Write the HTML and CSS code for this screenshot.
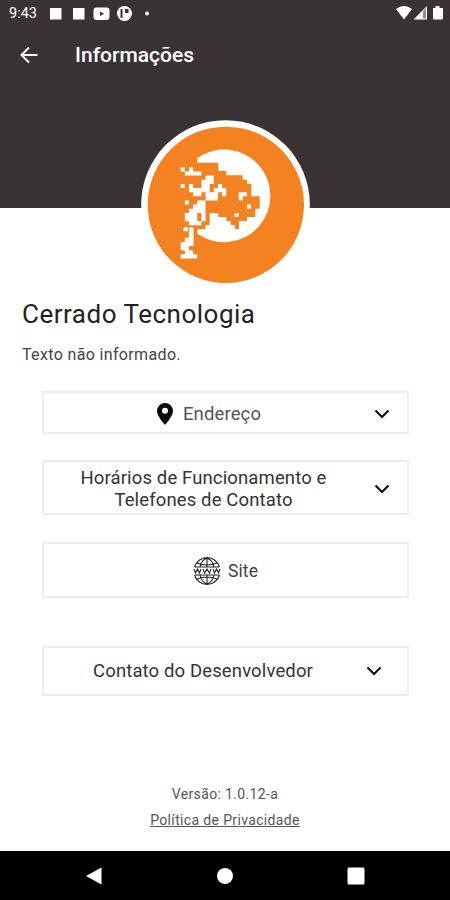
FILE: index.html
```html
<!DOCTYPE html>
<html lang="pt-BR">
<head>
  <meta charset="UTF-8" />
  <meta name="viewport" content="width=device-width, initial-scale=1.0" />
  <title>Informações</title>
  <link rel="stylesheet" href="styles.css">
</head>
<body>

  <header class="topo">
    <div class="status">
      <span class="hora">9:43</span>
      <svg class="notificacoes" width="104" height="18" viewBox="0 0 104 18" fill="#fff">
        <rect x="1" y="4" width="11.500" height="11.500" />
        <rect x="24" y="4" width="11.500" height="11.500" />
        <rect x="44.500" y="3.500" width="16" height="12.500" rx="3" />
        <path d="M51 7.500l4 2.300-4 2.300z" fill="#393433" />
        <circle cx="75.500" cy="9.500" r="7.500" />
        <path d="M71.500 5h2v9h-2zM76 5h3.500v4H76z" fill="#393433" />
        <circle cx="98" cy="9.500" r="2" />
      </svg>
      <svg class="sinais" width="50" height="18" viewBox="0 0 50 18" fill="#fff">
        <path d="M1 5Q9 -1 17 5L9 15.500z" />
        <path d="M32 2V15.500H18.500z" />
        <path d="M28 7l3-3v10.500h-3z" fill="#938f8e" />
        <path d="M38 4h2.500V2h4v2H47q1 0 1 1v9.500q0 1-1 1h-8q-1 0-1-1z" />
      </svg>
    </div>
    <div class="barra">
      <svg width="18" height="18" viewBox="0 0 18 18" fill="none" stroke="#fff" stroke-width="2">
        <path d="M17.500 9H2M9 1.500L1.500 9 9 16.500" />
      </svg>
      <h1>Informações</h1>
    </div>
  </header>

  <main>
    <svg class="logo" viewBox="-87 -60 507 507">
      <circle cx="166.500" cy="193.500" r="253" fill="#fff" />
      <circle cx="167.500" cy="194.500" r="234.500" fill="#f58220" />
      <!-- lua -->
      <path d="M82 54A139 139 0 1 1 82 281z" fill="#fff" />
      <!-- onça -->
      <path d="M80 68H145V93H169V106H218V119H231V131H244V169H269V206H256V231H231V243H207V267H194V255H182V243H169V231H145V219H120V243H132V267H80z" fill="#f58220" />
      <!-- pixels soltos -->
      <g transform="translate(32 82) scale(12.430)" fill="#fff">
        <path d="M0 0h1v1H0zM2 0h1v1h2v1H1V1h1zM0 4h1v1H0zM6 2h2v2H7v2H5v1H3V6H2V4h1v1h2V3h1z" />
        <path d="M9 4h1v1h1v2h-1V6H9v2H6v5H5v-2H4v2h1v1H2v-1H1v-2h1v-1h1V9h1V8h2V6h2V5h1z" />
        <path d="M1 8h1v1H1zM7 11h2v1h1v1H7zM7 13h1v2H6v-1h1z" />
        <path d="M.7 14.400h1v1h-1zM2 14.500h1.100V19H2v1h1v1h1v1H0v-1h1v-1H0v-2h1v-1h1z" />
        <path d="M14 6h2v1h-1v1h-1zM16 9h1v1h-1zM13 11h1v1h-1z" />
      </g>
    </svg>

    <h2>Cerrado Tecnologia</h2>
    <p class="texto">Texto não informado.</p>

    <div class="opcoes">
      <button class="opcao endereco">
        <span class="rotulo">
          <svg width="16" height="22" viewBox="0 0 16 22">
            <path d="M8 0a8 8 0 0 0-8 8c0 5.500 8 14 8 14s8-8.500 8-14a8 8 0 0 0-8-8zm0 4.700a3 3 0 1 1 0 6 3 3 0 0 1 0-6z" fill="#0b0b0b" fill-rule="evenodd" />
          </svg>
          <span>Endereço</span>
        </span>
        <svg class="seta" viewBox="0 0 16 10"><path d="M1.500 1.500L8 8l6.500-6.500" /></svg>
      </button>

      <button class="opcao horarios">
        <span class="rotulo">Horários de Funcionamento e<br>Telefones de Contato</span>
        <svg class="seta" viewBox="0 0 16 10"><path d="M1.500 1.500L8 8l6.500-6.500" /></svg>
      </button>

      <button class="opcao site">
        <svg width="28" height="28" viewBox="0 0 28 28" fill="none" stroke="#222" stroke-width="1.100">
          <path d="M1.500 10A13 13 0 0 1 26.500 10M1.500 18A13 13 0 0 0 26.500 18M14 1v9M14 18v9M7 10Q8 3.500 14 1Q20 3.500 21 10M7 18Q8 24.500 14 27Q20 24.500 21 18M4 6Q14 10 24 6M4 22Q14 18 24 22M2 10h24M2 18h24" />
          <path d="M1 12l1.500 4 2-4 2 4L8 12M10 12l1.500 4 2.500-4 2.500 4 1.500-4M20 12l1.500 4 2-4 2 4 1.500-4" />
        </svg>
        <span>Site</span>
      </button>

      <button class="opcao contato">
        <span class="rotulo">Contato do Desenvolvedor</span>
        <svg class="seta" viewBox="0 0 16 10"><path d="M1.500 1.500L8 8l6.500-6.500" /></svg>
      </button>
    </div>

    <footer>
      <p>Versão: 1.0.12-a</p>
      <a href="#">Política de Privacidade</a>
    </footer>
  </main>

  <nav class="navegacao">
    <svg width="18" height="18" viewBox="0 0 18 18"><path d="M1 9L16.500 .5v17z" /></svg>
    <svg width="18" height="18" viewBox="0 0 18 18"><circle cx="9" cy="9" r="8" /></svg>
    <svg width="18" height="18" viewBox="0 0 18 18"><rect x=".5" y=".5" width="17" height="17" rx="1.500" /></svg>
  </nav>

</body>
</html>
```
FILE: styles.css
```css
* { margin: 0; padding: 0; box-sizing: border-box; }

body {
  font-family: Roboto, Arial, sans-serif;
  height: 900px;
  display: flex;
  flex-direction: column;
  background-color: #fff;
  color: #222;
  overflow: hidden;
}

svg {
  display: block;
  flex-shrink: 0;
}

.topo {
  height: 208px;
  background-color: #393433;
  color: #fff;
}

.status {
  height: 26px;
  padding: 0 5px 0 9px;
  display: flex;
  align-items: center;
}

.hora {
  width: 40px;
  font-size: 14.500px;
}

.sinais { margin-left: auto; }

.barra {
  height: 58px;
  padding-left: 20px;
  display: flex;
  align-items: center;
  gap: 37px;
}

.barra h1 {
  font-size: 21px;
  font-weight: 500;
}

main {
  flex-grow: 1;
  display: flex;
  flex-direction: column;
}

.logo {
  width: 169px;
  height: 169px;
  margin: -88px 0 0 141px;
}

h2 {
  margin: 8px 0 0 22px;
  font-size: 26px;
  line-height: 34px;
  font-weight: 400;
  letter-spacing: 0.5px;
}

.texto {
  margin: 14px 0 0 22px;
  font-size: 16px;
  line-height: 20px;
  letter-spacing: 0.350px;
  color: #444;
}

.opcoes {
  margin: 26px 41px 0 42px;
  display: flex;
  flex-direction: column;
}

.opcao {
  border: 2px solid #ededed;
  background-color: #fff;
  display: flex;
  align-items: center;
  font-family: inherit;
  font-size: 18.500px;
  line-height: 22px;
  color: #333;
  letter-spacing: 0.130px;
}

.rotulo {
  flex-grow: 1;
  display: flex;
  justify-content: center;
  align-items: center;
  gap: 10px;
  text-align: center;
}

.seta {
  width: 16px;
  height: 10px;
  fill: none;
  stroke: #111;
  stroke-width: 2.200;
}

.endereco { height: 43px; padding: 2px 17px 0 0; color: #555; }
.horarios { height: 55px; margin-top: 26px; padding: 2px 17px 0 0; }
.horarios .rotulo { padding-right: 11px; }
.site {
  height: 56px;
  margin-top: 27px;
  padding-top: 2px;
  justify-content: center;
  gap: 7px;
  font-size: 17.500px;
  color: #444;
}
.contato { height: 50px; margin-top: 48px; padding-right: 25px; }
.contato .rotulo { padding-right: 4px; }

footer {
  margin-top: 88px;
  text-align: center;
  font-size: 14px;
  line-height: 20px;
  letter-spacing: 0.350px;
  color: #555;
}

footer p { margin-bottom: 6px; }
footer a { color: #555; }

.navegacao {
  height: 49px;
  padding: 0 85px;
  background-color: #000;
  display: flex;
  justify-content: space-between;
  align-items: center;
  fill: #fff;
}
```
